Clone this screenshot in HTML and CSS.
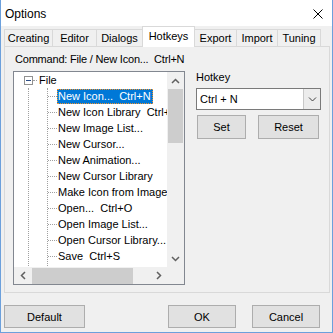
FILE: index.html
```html
<!DOCTYPE html>
<html lang="en">
<head>
    <meta charset="UTF-8">
    <title>Options</title>
    <link rel="stylesheet" href="styles.css">
</head>
<body>
<div class="window">
    <header class="titlebar">
        <span class="title">Options</span>
        <svg class="close-icon" viewBox="0 0 10 10" fill="none" stroke="#000" stroke-width="1">
            <path d="M0.5 0.5L9.5 9.5M9.5 0.5L0.5 9.5"></path>
        </svg>
    </header>

    <nav class="tabs">
        <span class="tab">Creating</span>
        <span class="tab">Editor</span>
        <span class="tab">Dialogs</span>
        <span class="tab tab-active">Hotkeys</span>
        <span class="tab">Export</span>
        <span class="tab">Import</span>
        <span class="tab tab-last">Tuning</span>
    </nav>

    <section class="panel">
        <div class="command">Command: File / New Icon...  Ctrl+N</div>

        <div class="panel-body">
            <div class="tree">
                <div class="tree-content">
                    <div class="tree-row">
                        <span class="expander"></span>
                        <span class="stub stub-root"></span>
                        <span class="node-label node-root">File</span>
                    </div>
                    <div class="branch">
                        <div class="children">
                            <div class="tree-row"><span class="stub"></span><span class="node-label selected">New Icon...  Ctrl+N</span></div>
                            <div class="tree-row"><span class="stub"></span><span class="node-label">New Icon Library  Ctrl+L</span></div>
                            <div class="tree-row"><span class="stub"></span><span class="node-label">New Image List...</span></div>
                            <div class="tree-row"><span class="stub"></span><span class="node-label">New Cursor...</span></div>
                            <div class="tree-row"><span class="stub"></span><span class="node-label">New Animation...</span></div>
                            <div class="tree-row"><span class="stub"></span><span class="node-label">New Cursor Library</span></div>
                            <div class="tree-row"><span class="stub"></span><span class="node-label">Make Icon from Image...</span></div>
                            <div class="tree-row"><span class="stub"></span><span class="node-label">Open...  Ctrl+O</span></div>
                            <div class="tree-row"><span class="stub"></span><span class="node-label">Open Image List...</span></div>
                            <div class="tree-row"><span class="stub"></span><span class="node-label">Open Cursor Library...</span></div>
                            <div class="tree-row"><span class="stub"></span><span class="node-label">Save  Ctrl+S</span></div>
                            <div class="tree-row tree-row-empty"></div>
                        </div>
                    </div>
                </div>

                <div class="vscroll">
                    <span class="scroll-btn">
                        <svg width="9" height="6" viewBox="0 0 9 6" fill="none" stroke="#606060" stroke-width="1.5"><path d="M1 5L4.5 1.5L8 5"></path></svg>
                    </span>
                    <span class="vthumb"></span>
                    <span class="scroll-track"></span>
                    <span class="scroll-btn">
                        <svg width="9" height="6" viewBox="0 0 9 6" fill="none" stroke="#606060" stroke-width="1.5"><path d="M1 1L4.5 4.5L8 1"></path></svg>
                    </span>
                </div>

                <div class="hscroll">
                    <span class="scroll-btn">
                        <svg width="6" height="9" viewBox="0 0 6 9" fill="none" stroke="#606060" stroke-width="1.5"><path d="M5 1L1.5 4.5L5 8"></path></svg>
                    </span>
                    <span class="hthumb"></span>
                    <span class="scroll-track"></span>
                    <span class="scroll-btn">
                        <svg width="6" height="9" viewBox="0 0 6 9" fill="none" stroke="#606060" stroke-width="1.5"><path d="M1 1L4.5 4.5L1 8"></path></svg>
                    </span>
                </div>

                <div class="corner"></div>
            </div>

            <div class="hotkey">
                <div class="hotkey-label">Hotkey</div>
                <div class="combo">
                    <span class="combo-value">Ctrl + N</span>
                    <span class="combo-button">
                        <svg width="9" height="6" viewBox="0 0 9 6" fill="none" stroke="#404040" stroke-width="1"><path d="M1 1.5L4.5 5L8 1.5"></path></svg>
                    </span>
                </div>
                <div class="hotkey-buttons">
                    <button class="btn btn-set">Set</button>
                    <button class="btn btn-reset">Reset</button>
                </div>
            </div>
        </div>
    </section>

    <footer class="footer">
        <button class="btn btn-default">Default</button>
        <button class="btn btn-ok">OK</button>
        <button class="btn btn-cancel">Cancel</button>
    </footer>
</div>
</body>
</html>
```

FILE: styles.css
```css
:root {
    --color-face: #f0f0f0;
    --color-tab-border: #d9d9d9;
    --color-button: #e1e1e1;
    --color-button-border: #adadad;
    --color-frame: #6ca0dc;
    --color-tree-line: #a0a0a0;
    --color-thumb: #cdcdcd;
    --color-select: #0078d7;
    --font-ui: 'Liberation Sans', Arial, sans-serif;
}

* {
    box-sizing: border-box;
    margin: 0;
    padding: 0;
}

body {
    font-family: var(--font-ui);
    font-size: 11px;
    color: #000;
    background: #fff;
}

.window {
    width: 333px;
    height: 333px;
    display: flex;
    flex-direction: column;
    background: var(--color-face);
    border: 1px solid var(--color-frame);
    border-top: none;
}

/* title bar */
.titlebar {
    height: 26px;
    flex: none;
    display: flex;
    align-items: center;
    justify-content: space-between;
    padding: 1px 9px 0 4px;
    background: #fff;
}

.title {
    font-size: 12px;
    line-height: 16px;
}

.close-icon {
    width: 10px;
    height: 10px;
}

/* tabs */
.tabs {
    height: 20px;
    flex: none;
    display: grid;
    grid-template-columns: 48px 44px 46px 52px 42px 41px 44px;
    align-items: end;
    padding-left: 3px;
}

.tab {
    height: 17px;
    line-height: 16px;
    text-align: center;
    background: var(--color-face);
    border: 1px solid var(--color-tab-border);
    border-right: none;
    border-bottom: none;
    white-space: nowrap;
}

.tab-last {
    border-right: 1px solid var(--color-tab-border);
}

.tab-active {
    position: relative;
    z-index: 1;
    height: 21px;
    margin-bottom: -1px;
    margin-right: -1px;
    padding-top: 1px;
    background: #fff;
    border-right: 1px solid var(--color-tab-border);
}

/* page */
.panel {
    height: 247px;
    flex: none;
    margin: 0 2px 0 3px;
    padding: 6px 0 0 8px;
    border: 1px solid var(--color-tab-border);
    background: var(--color-face);
}

.command {
    padding-left: 2px;
    line-height: 13px;
    letter-spacing: -0.2px;
    white-space: pre;
}

.panel-body {
    display: flex;
    align-items: flex-start;
    gap: 11px;
    margin-top: 5px;
}

/* tree view */
.tree {
    display: grid;
    grid-template-columns: 153px 17px;
    grid-template-rows: 195px 17px;
    border: 1px solid #828790;
    background: #fff;
}

.tree-content {
    overflow: hidden;
    white-space: nowrap;
}

.tree-row {
    height: 16px;
    display: flex;
    align-items: flex-start;
}

.tree-content > .tree-row {
    padding-left: 10px;
}

.expander {
    width: 9px;
    height: 9px;
    flex: none;
    margin-top: 4px;
    display: flex;
    align-items: center;
    justify-content: center;
    border: 1px solid #919191;
    background: #fff;
}

.expander::after {
    content: '';
    width: 5px;
    height: 1px;
    background: #2c4d86;
}

.stub {
    width: 9px;
    flex: none;
    margin-top: 8px;
    border-top: 1px dotted var(--color-tree-line);
}

.stub-root {
    width: 4px;
}

.node-label {
    flex: none;
    margin-top: 1px;
    padding-right: 1px;
    line-height: 13px;
    border: 1px solid transparent;
    white-space: pre;
}

.node-root {
    padding-left: 1px;
}

.node-label.selected {
    color: #fff;
    background: var(--color-select);
    border: 1px dotted #f0922c;
}

.branch {
    margin-left: 14px;
    border-left: 1px dotted var(--color-tree-line);
}

.children {
    margin-left: 18px;
    border-left: 1px dotted var(--color-tree-line);
}

/* scrollbars */
.vscroll,
.hscroll,
.corner {
    background: var(--color-face);
}

.vscroll {
    display: flex;
    flex-direction: column;
}

.hscroll {
    display: flex;
}

.scroll-btn {
    width: 17px;
    height: 17px;
    flex: none;
    display: flex;
    align-items: center;
    justify-content: center;
}

.scroll-track {
    flex: 1;
}

.vthumb {
    height: 54px;
    flex: none;
    margin: 0 1px;
    background: var(--color-thumb);
}

.hthumb {
    width: 101px;
    flex: none;
    margin: 1px 0 0 1px;
    background: var(--color-thumb);
}

/* hotkey column */
.hotkey {
    width: 125px;
}

.hotkey-label {
    line-height: 13px;
}

.combo {
    height: 22px;
    margin-top: 4px;
    display: flex;
    border: 1px solid #7a7a7a;
    background: #fff;
}

.combo-value {
    flex: 1;
    padding-left: 3px;
    line-height: 20px;
}

.combo-button {
    width: 17px;
    display: flex;
    align-items: center;
    justify-content: center;
    background: #ececec;
    border-left: 1px solid #c8c8c8;
}

.hotkey-buttons {
    display: flex;
    margin-top: 5px;
}

/* buttons */
.btn {
    height: 24px;
    font-family: var(--font-ui);
    font-size: 11px;
    color: #000;
    background: var(--color-button);
    border: 1px solid var(--color-button-border);
    border-radius: 0;
}

.btn-set {
    width: 49px;
    margin-left: 1px;
}

.btn-reset {
    width: 61px;
    margin-left: 12px;
}

.footer {
    display: flex;
    margin-top: 12px;
    padding: 0 12px 0 3px;
}

.footer .btn {
    height: 23px;
}

.btn-default {
    width: 81px;
}

.btn-ok {
    width: 68px;
    margin-left: auto;
}

.btn-cancel {
    width: 68px;
    margin-left: 16px;
}
```
